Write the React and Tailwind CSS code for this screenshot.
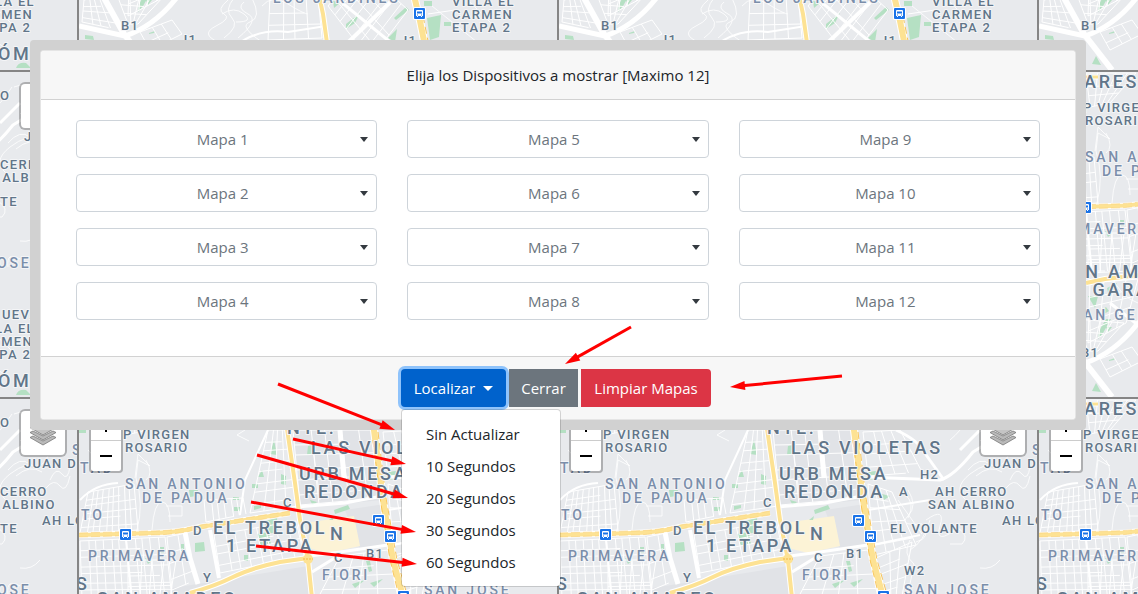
import React from "react";

const maps = Array.from({ length: 12 }, (_, i) => `Mapa ${i + 1}`);
const intervals = ["Sin Actualizar", "10 Segundos", "20 Segundos", "30 Segundos", "60 Segundos"];

/* Street grid inside a quadrilateral: n columns by m rows. */
function mesh([a, b, c, d], n, m) {
  const mix = (p, q, t) => [p[0] + (q[0] - p[0]) * t, p[1] + (q[1] - p[1]) * t];
  const seg = (p, q) => `M${p[0].toFixed(1)} ${p[1].toFixed(1)}L${q[0].toFixed(1)} ${q[1].toFixed(1)}`;
  let out = "";
  for (let i = 0; i <= n; i++) {
    const t = Math.min(1, (i + (i % 3 === 1 ? 0.15 : 0)) / n);
    out += seg(mix(a, b, t), mix(d, c, t));
  }
  for (let j = 0; j <= m; j++) {
    const t = Math.min(1, (j + (j % 2 ? 0.2 : 0)) / m);
    const left = mix(a, d, t);
    const right = mix(b, c, t);
    out += j % 3 === 1 ? seg(left, mix(left, right, 0.7)) : seg(left, right);
  }
  return out;
}

const streets = [
  mesh([[88, 492], [134, 484], [138, 530], [80, 533]], 9, 6),
  mesh([[80, 541], [165, 537], [172, 598], [82, 598]], 11, 7),
  mesh([[167, 537], [186, 533], [196, 580], [172, 590]], 2, 4),
  mesh([[268, 430], [287, 430], [298, 506], [250, 513]], 4, 8),
  mesh([[204, 500], [243, 498], [246, 514], [206, 522]], 6, 1),
  mesh([[214, 535], [296, 521], [304, 556], [220, 573]], 8, 4),
  mesh([[293, 430], [372, 430], [382, 498], [300, 505]], 5, 6),
  mesh([[383, 432], [420, 430], [442, 472], [388, 476]], 4, 4),
  mesh([[388, 484], [412, 492], [436, 545], [394, 555]], 4, 6),
  mesh([[396, 558], [432, 542], [422, 596], [404, 600]], 3, 5),
  mesh([[340, 556], [388, 550], [398, 598], [318, 598]], 4, 4),
  mesh([[84, 654], [104, 650], [120, 684], [82, 676]], 4, 4),
  mesh([[116, 646], [164, 650], [138, 678], [128, 678]], 4, 3),
  mesh([[140, 686], [172, 674], [182, 688], [150, 704]], 3, 2),
  mesh([[270, 650], [318, 650], [322, 692], [268, 694]], 4, 3),
  mesh([[360, 620], [408, 664], [370, 714], [328, 660]], 7, 4),
  mesh([[130, 610], [178, 606], [166, 650], [128, 670]], 4, 5),
  mesh([[128, 560], [176, 560], [170, 598], [128, 600]], 4, 3),
  mesh([[126, 400], [176, 400], [150, 430], [130, 434]], 5, 3),
].join("");

const contours =
  "M494 414q14-6 12 8t14 2M488 470q12-14 22-6t18-8M496 476q14-12 26-4M470 440q10-8 22-26M500 440l14 14 20-10M486 500q-14-12 4-26t28-6M530 480q6-14 12-6t8-8M526 488q8-10 14-2t10-10M446 520q20-14 14 6t18 2q12 8 4 16h-12M428 490q10 16 0 26t14 8q10 14-6 18M450 520q-6 22-20 30M430 540q-8 14 4 24l-6 30M500 586q-14-8-12 8M520 560q-8 10-20 8M135 478l3-24 12 12-12-6-2 18q8 26 1 52M152 530q2-28 10-28t8 20M166 506h16v10h-14M312 440l8 60M245 430l-8 5 12 6M228 654q-12 10-4 14t-8 12 2 16M234 652q-10 12-2 20t-8 20M244 656q-8 6 4 12t-10 24M222 668q12-8 22 0t-8 8M252 652q10 20-2 24t12 20M262 660q10-12 26-2t20 10M150 600q10 24 28 30M146 460q8 14 0 20M88 450q10 8 4 20M418 500l24 34M424 494q12 8 4 24M118 420l-4 20M432 660l50 40M464 650l30 30";

const parks = [
  "M270 454l4-14 3 15z", "M258 477l4-7 2 7z", "M281 474l5 2v9l-5-1z", "M252 484h6v4h-6z", "M233 497h6v3h-6z", "M234 507h6v4h-6z",
  "M254 506l7-1v3l-7 2z", "M189 490h9l-1 6-7 1z", "M195 543l9-1 1 9-10 1z", "M159 547h5v6h-5z", "M181 544h3v7h-3z", "M145 558l8 2-5 4z",
  "M265 521l12-3 1 14-12 2z", "M257 534l12-2 2 12-10 2z", "M244 555h4v6h-4z", "M308 446l4-1v10l-5 0z", "M310 500l7 2-4 4z", "M334 510l14-5 2 4-15 5z",
  "M329 520l5-4-1 4z", "M370 583l13-4-9 8z", "M366 561l4 0 2 10-3 1z", "M387 472l9-1v8l-9 1z", "M402 494l8 2-6 4z", "M365 580l-10 8-3-4z",
  "M146 654l6 0-4 5z", "M149 687l6-2-1 2-5 1z", "M346 678l14-11-5 10-9 6z", "M394 672l12-11 3 3-13 10z", "M388 692l9-9-2 13z", "M427 672l14-3-2 22-9 3z",
  "M333 655l8 1-7 6z", "M424 655h8v5h-8z", "M444 676h7v4h-7z", "M128 623l10 0-3 12z", "M147 615l10-5-4 10-4 4z", "M139 658l7-12 5 0-8 14-5 6z", "M132 718l4-8 5 9z",
  "M496 722q2-6 10-5l5 5z", "M79 429h7v4h-7z", "M85 689l8 1 1 4-9-1z", "M141 638l5-4 3 4-5 3z",
];

const big = "fill-[#617589] text-[18px] font-medium tracking-[0.15em]";
const mid = "fill-[#617589] text-[13px] font-medium tracking-widest";
const soft = "fill-[#7b8eaa] text-[14px] font-medium tracking-[0.2em]";

const labels = [
  [big, 124, 415, "ARES"], [big, 287, 434, "NTE."], [big, 311, 454, "LAS VIOLETAS"], [big, 299, 480, "URB MESA"],
  [big, 304, 498, "REDONDA"], [big, 213, 534, "EL TREBOL"], [big, 226, 552, "1 ETAPA"], [big, 330, 540, "N"],
  [big, 76, 590, "S"], [big, 97, 605, "SAN AMADEO"], [big, 98, 623, "DE GARAGAY"], [big, 478, 714, "ÓM"],
  [mid, 123, 439, "P VIRGEN"], [mid, 125, 452, "ROSARIO"], [mid, 193, 535, "D"], [mid, 283, 507, "C"], [mid, 203, 582, "Y"],
  [mid, 366, 558, "B1"], [mid, 334, 562, "C"], [mid, 440, 479, "H2"], [mid, 419, 496, "A"], [mid, 455, 496, "AH CERRO"],
  [mid, 448, 509, "SAN ALBINO"], [mid, 410, 533, "EL VOLANTE"], [mid, 424, 575, "W2"], [mid, 522, 525, "AH LOMAS"],
  [mid, 504, 468, "JUAN DIEGO"], [mid, 480, 427, "O"], [mid, 482, 646, "UEVA"], [mid, 452, 660, "VILLA EL"],
  [mid, 452, 673, "CARMEN"], [mid, 452, 686, "ETAPA 2"], [mid, 121, 684, "B1"], [mid, 180, 698, "J1"], [mid, 400, 699, "J1"],
  [soft, 552, 455, "S"], [soft, 125, 489, "SAN ANTONIO"], [soft, 142, 503, "DE PADUA"], [soft, 80, 473, "TAD"],
  [soft, 81, 520, "TO"], [soft, 88, 561, "PRIMAVERA"], [soft, 322, 580, "FIORI"], [soft, 424, 595, "SAN JOSE"],
  [soft, 112, 647, "SAN GERMAN"], [soft, 273, 657, "LOS JARDINES"],
];

const stops = [[120, 529], [373, 515], [385, 531], [398, 591], [414, 662]];

const highways = [
  ["M79 535L120 534 152 533Q175 533 200 527L290 513", 4],
  ["M285 415L295 483 300 520 308 560 312 598", 4],
  ["M190 593Q215 586 233 577T280 562L308 558", 4],
  ["M372 415L374 430 383 500 393 560 404 600", 6],
  ["M126 610L145 606 180 602", 4],
  ["M318 645L323 668 327 697", 4],
  ["M413 645L420 675 425 700", 6],
  ["M126 404h12", 3],
];

const avenues = [
  ["M185 532L190 558 198 584", 5], ["M210 530L219 578", 4], ["M297 507L345 503 382 496", 3], ["M340 430L344 478", 5],
  ["M310 556L340 552 388 545", 3], ["M312 572L338 556", 3], ["M416 430Q438 440 444 452L464 480", 3], ["M388 477L410 478 460 480Q474 476 493 452L506 444", 3],
  ["M388 510L450 500", 2], ["M392 545L440 535", 2], ["M268 430L245 480 240 515", 2], ["M80 500Q95 484 118 483", 2],
  ["M103 650L124 688 152 724", 6], ["M79 680L125 690Q155 680 178 650L188 640", 5], ["M340 704L420 628", 4], ["M340 655L395 700", 3],
  ["M235 700Q258 682 288 686L326 680", 2], ["M428 668L455 664", 1], ["M150 630L178 652", 3], ["M126 540L132 600", 2], ["M480 450L500 430", 3],
];

function CityMap() {
  return (
    <svg viewBox="79 399 478 325" className="block h-full w-full font-[Roboto,sans-serif]" aria-hidden="true">
      <rect x="79" y="399" width="478" height="325" fill="#e8eaed" />
      <path d="M293 430H372L382 500 300 508zM345 510L385 504 392 545 360 550zM160 590L308 566 312 600H160z" fill="#e1e3e7" />
      <path d="M311 522L354 516 360 546 328 553 308 548z" fill="#fcf3d6" />
      {parks.map((d) => <path key={d} d={d} fill="#b5e0c3" />)}
      <g fill="none" stroke="#fff" strokeLinejoin="round">
        <path d={streets} />
        <path d={contours} strokeOpacity=".8" />
        {avenues.map(([d, w]) => <path key={d} d={d} strokeWidth={w} />)}
      </g>
      <g fill="none">
        {highways.map(([d, w]) => <path key={d} d={d} stroke="#fff" strokeWidth={w + 2} />)}
        {highways.map(([d, w]) => <path key={d} d={d} stroke="#fde293" strokeWidth={w} />)}
        <path d="M79 533L150 531Q175 531 200 525L290 511M79 537L150 535Q176 535 200 529L290 515" stroke="#f8cf73" strokeWidth=".6" strokeDasharray="9 3" />
        <path d="M378 432L386 498 397 560 408 598M373 440L381 504 390 560 400 600M423 670L429 700" stroke="#f7bf4c" strokeWidth=".9" strokeDasharray="7 4" />
      </g>
      <circle cx="308" cy="559" r="5" fill="#fde293" />
      <path d="M303 559h10" stroke="#f5b945" strokeDasharray="2 1" />
      {stops.map(([x, y]) => (
        <g key={`${x}-${y}`} transform={`translate(${x} ${y})`}>
          <rect x="-1" y="-1" width="13" height="13" rx="2" fill="#fff" />
          <rect width="11" height="11" rx="1" fill="#1a73e8" />
          <path d="M3 2h5q1 0 1 1v5h-1v1h-1v-1h-3v1h-1v-1h-1v-5q0-1 1-1z" fill="#fff" />
          <path d="M3 3.500h5v2h-5zM3 6.500h1v1h-1zM7 6.500h1v1h-1z" fill="#1a73e8" />
        </g>
      ))}
      <g stroke="#f4f5f7" strokeWidth="2" strokeLinejoin="round" style={{ paintOrder: "stroke" }}>
        {labels.map(([cls, x, y, text]) => (
          <text key={`${text}-${x}-${y}`} x={x} y={y} className={cls}>{text}</text>
        ))}
      </g>
    </svg>
  );
}

function MapTile() {
  return (
    <div className="relative h-[327px] overflow-hidden border-t-2 border-l-2 border-[#858585]">
      <CityMap />
      <div className="absolute top-2.5 left-2.5 flex w-[34px] flex-col rounded border-2 border-black/25 bg-white bg-clip-padding">
        <button type="button" aria-label="Acercar" className="flex h-[30px] items-center justify-center border-b border-[#ccc]">
          <svg viewBox="0 0 12 12" className="size-3" aria-hidden="true"><path d="M6 0v12M0 6h12" stroke="#000" strokeWidth="2" /></svg>
        </button>
        <button type="button" aria-label="Alejar" className="flex h-[30px] items-center justify-center">
          <svg viewBox="0 0 12 12" className="size-3" aria-hidden="true"><path d="M0 6h12" stroke="#000" strokeWidth="2" /></svg>
        </button>
      </div>
      <button type="button" aria-label="Capas" className="absolute top-2.5 right-2.5 flex size-12 items-center justify-center rounded-md border-2 border-black/25 bg-white bg-clip-padding">
        <svg viewBox="0 0 26 26" className="size-[26px]" aria-hidden="true">
          <path d="M0 17.500l3-1.500 10 5 10-5 3 1.500-13 7.500z" fill="#b9b9b9" stroke="#777" strokeWidth=".8" />
          <path d="M0 12.500l3-1.500 10 5 10-5 3 1.500-13 7.500z" fill="#b9b9b9" stroke="#777" strokeWidth=".8" />
          <path d="M0 7.500L13 1l13 6.500-13 7.500z" fill="#c4c4c4" stroke="#777" strokeWidth=".8" />
        </svg>
      </button>
    </div>
  );
}

function MapSelect({ name }) {
  return (
    <div className="relative">
      <select
        aria-label={name}
        defaultValue=""
        className="block h-[38px] w-full appearance-none rounded border border-[#ced4da] bg-white pr-4 pl-2 text-center text-[#6c757d]"
      >
        <option value="">{name}</option>
      </select>
      <svg viewBox="0 0 8 5" className="pointer-events-none absolute top-[17px] right-[9px] h-[5px] w-2" aria-hidden="true">
        <path d="M0 0h8L4 5z" fill="#343a40" />
      </svg>
    </div>
  );
}

const arrows = [
  [631, 327, 565, 364], [842, 376, 730, 387], [278, 384, 395, 430], [293, 439, 406, 464],
  [257, 455, 408, 498], [251, 502, 416, 532], [256, 546, 417, 564],
];

function Arrows() {
  return (
    <svg width="1138" height="594" className="pointer-events-none absolute top-0 left-0 z-20" aria-hidden="true">
      {arrows.map(([x1, y1, x2, y2]) => {
        const length = Math.hypot(x2 - x1, y2 - y1);
        const angle = (Math.atan2(y2 - y1, x2 - x1) * 180) / Math.PI;
        return (
          <g key={`${x1}-${y1}`} transform={`translate(${x2} ${y2}) rotate(${angle})`}>
            <path d={`M${-length} 0H-12`} stroke="#f00" strokeWidth="3" />
            <path d="M0 0L-15 4.500V-4.500z" fill="#f00" />
          </g>
        );
      })}
    </svg>
  );
}

export default function App() {
  return (
    <div className="relative min-h-screen overflow-hidden font-['Open_Sans','Noto_Sans',sans-serif] text-[15px] leading-6 text-[#212529]">
      <div className="absolute inset-0 overflow-hidden">
        <div className="-mt-[257px] -ml-[403px] grid w-max grid-cols-[repeat(4,480px)]">
          {maps.map((name) => <MapTile key={name} />)}
        </div>
      </div>

      <main className="relative z-10 mt-10 mr-[52px] mb-8 ml-[30px] rounded bg-[#d1d1d1] p-2.5">
        <section role="dialog" aria-labelledby="title" className="rounded border border-black/10 bg-white">
          <header className="rounded-t border-b border-black/15 bg-[#f7f7f7] p-3 text-center">
            <h1 id="title">Elija los Dispositivos a mostrar [Maximo 12]</h1>
          </header>

          <div className="grid grid-flow-col grid-cols-3 grid-rows-4 gap-x-[30px] gap-y-4 px-[35px] pt-5 pb-9">
            {maps.map((name) => <MapSelect key={name} name={name} />)}
          </div>

          <footer className="flex justify-center gap-[3px] rounded-b border-t border-black/15 bg-[#f7f7f7] p-3 pr-4">
            <div className="relative">
              <button
                type="button"
                aria-expanded="true"
                aria-haspopup="menu"
                className="flex h-[38px] w-[105px] items-center justify-center gap-2 rounded bg-[#0062cc] text-white ring-3 ring-[#8fc3fb]"
              >
                Localizar
                <svg viewBox="0 0 10 5" className="h-[5px] w-2.5" aria-hidden="true"><path d="M0 0h10L5 5z" fill="#fff" /></svg>
              </button>
              <ul role="menu" className="absolute top-10 left-0 w-40 rounded border border-black/15 bg-white bg-clip-padding py-2">
                {intervals.map((text) => (
                  <li key={text} role="none">
                    <button type="button" role="menuitem" className="block w-full px-6 py-1 text-left">{text}</button>
                  </li>
                ))}
              </ul>
            </div>
            <button type="button" className="h-[38px] w-[69px] bg-[#6c757d] text-white">Cerrar</button>
            <button type="button" className="h-[38px] w-[130px] rounded-r bg-[#dc3545] text-white">Limpiar Mapas</button>
          </footer>
        </section>
      </main>
      <Arrows />
    </div>
  );
}
